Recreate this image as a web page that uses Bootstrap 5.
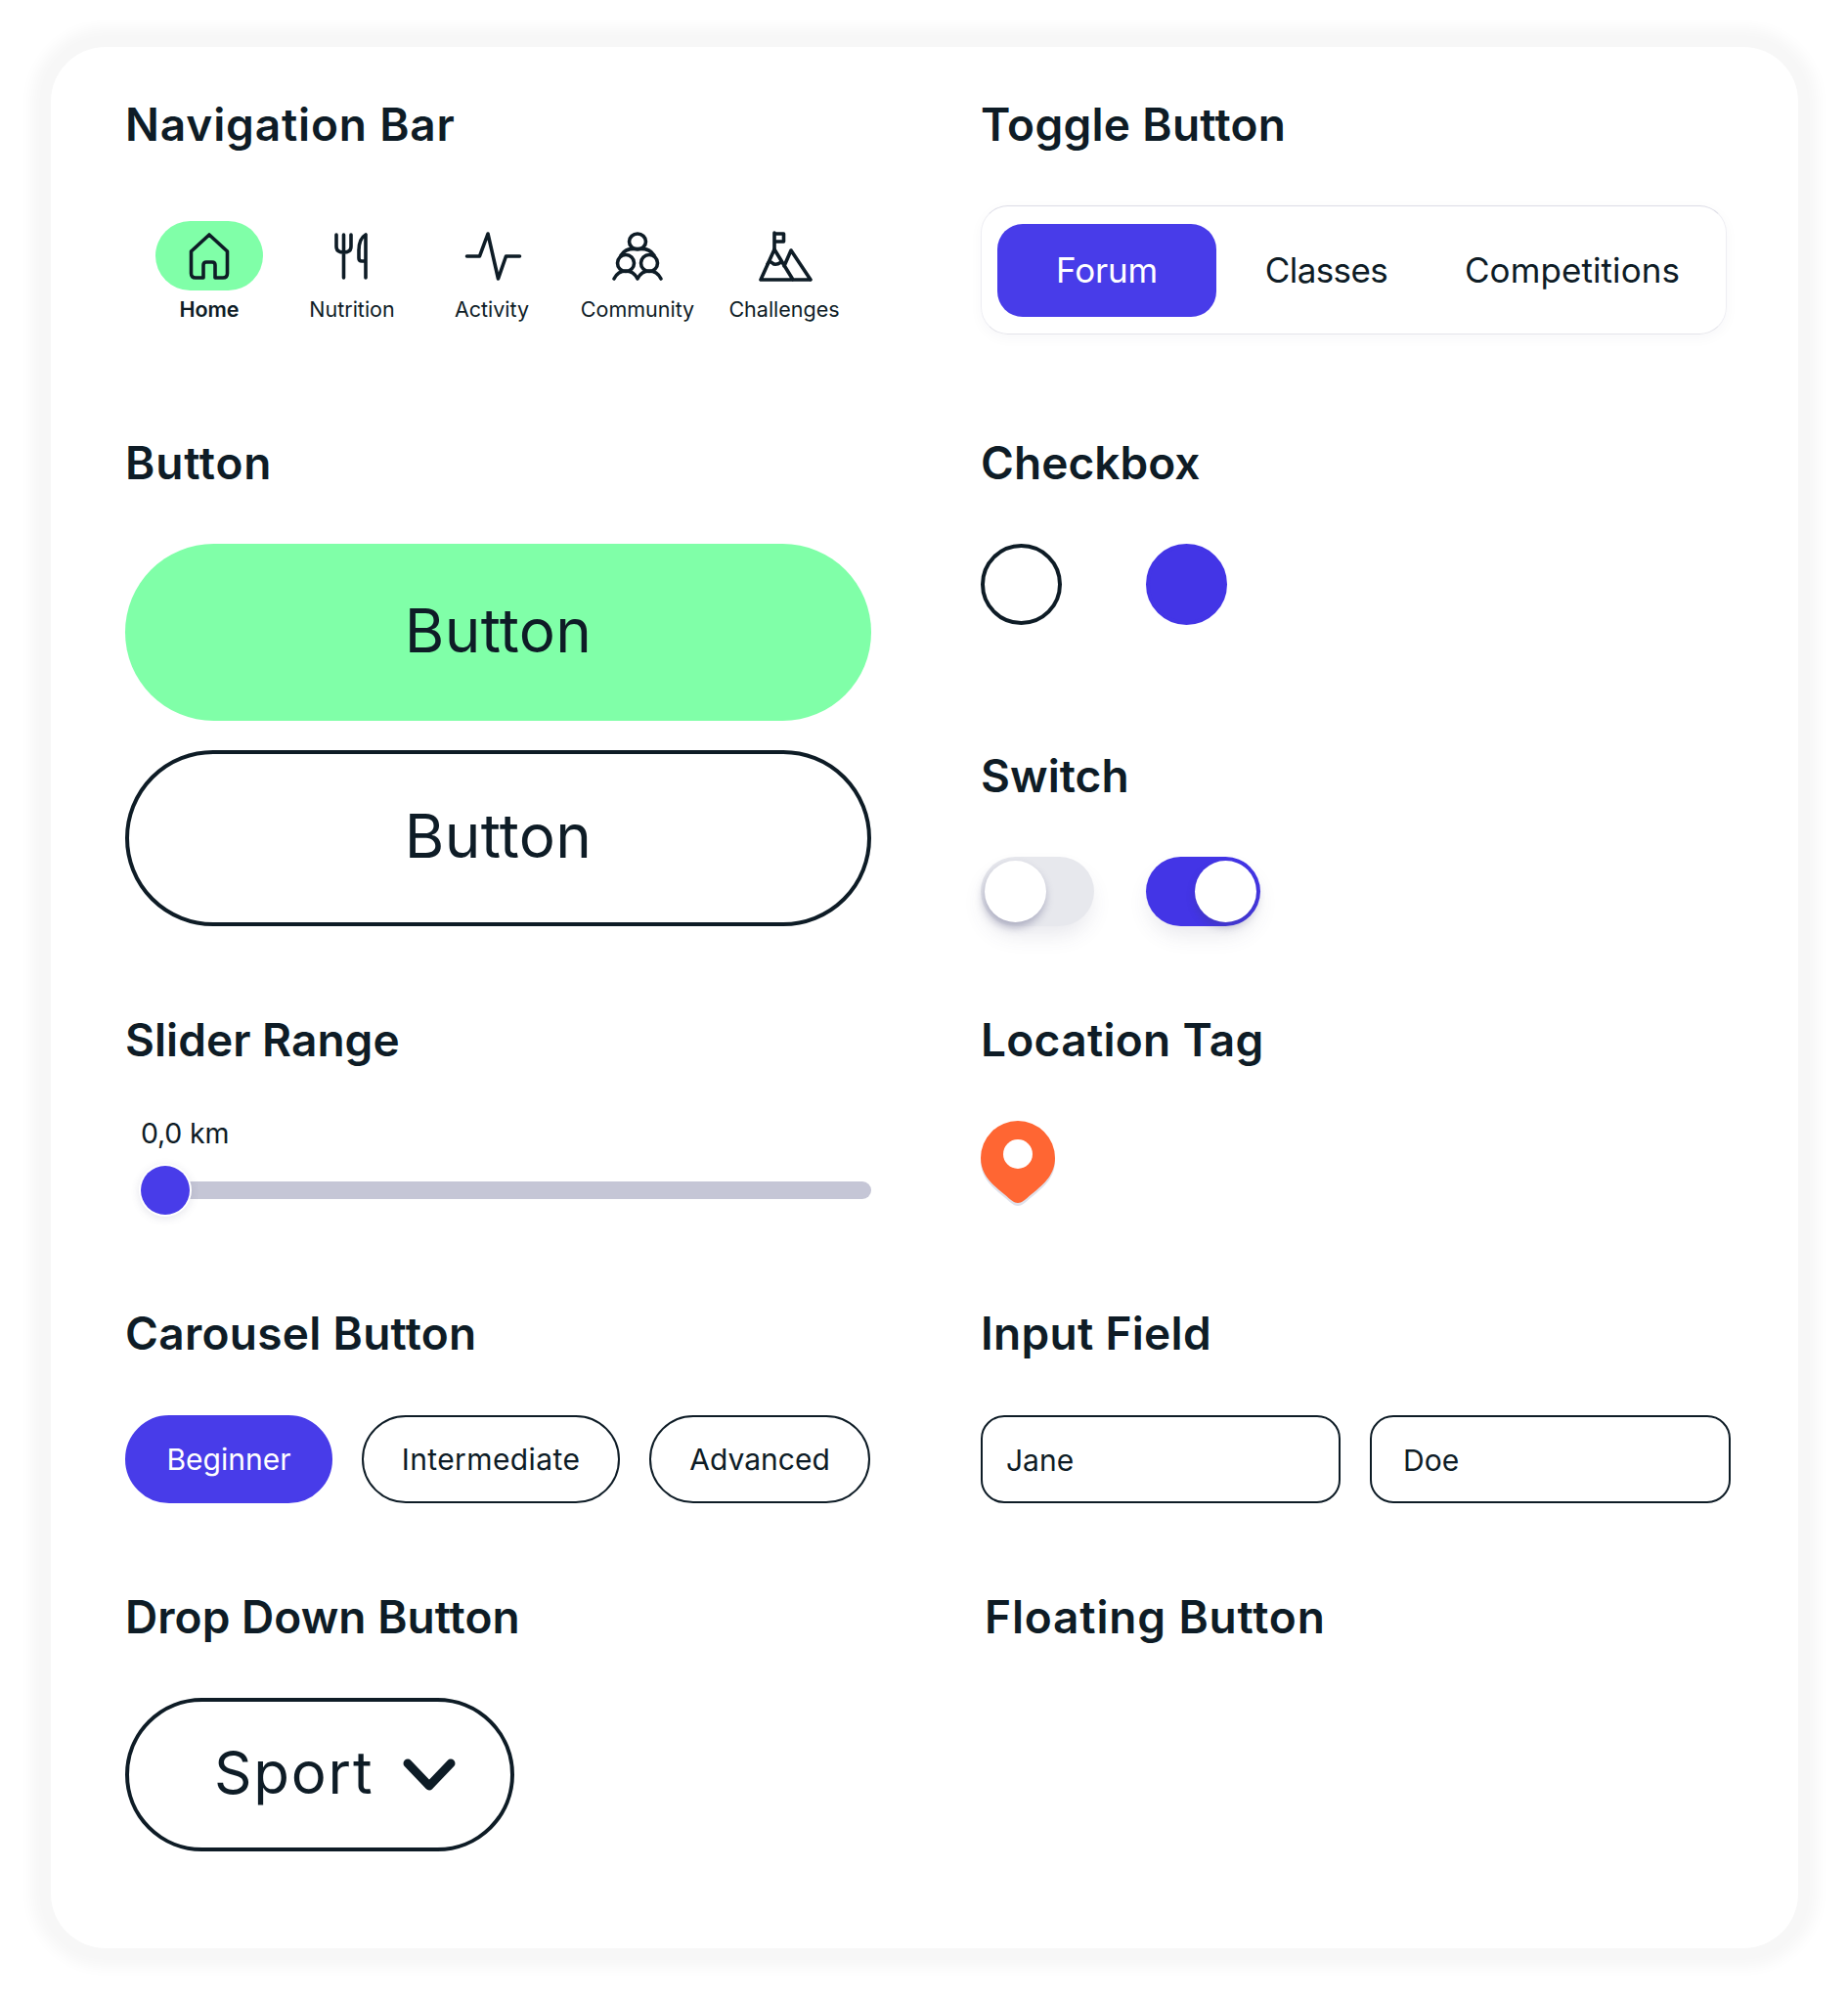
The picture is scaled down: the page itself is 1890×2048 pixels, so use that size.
<!DOCTYPE html>
<html lang="en">
<head>
<meta charset="utf-8">
<title>UI Components</title>
<link href="https://cdn.jsdelivr.net/npm/bootstrap@5.3.0/dist/css/bootstrap.min.css" rel="stylesheet">
<style>
:root{--ink:#0e1c26;--violet:#483ce9;--mint:#80ffa8;}
html,body{background:#fff;}
body{margin:0;padding:48px 0 56px 52px;font-family:Inter,"Liberation Sans",sans-serif;color:var(--ink);}
.sheet{width:1787px;height:1944px;padding:51px 69px 0 76px;background:#fff;border-radius:56px;box-shadow:0 0 14px 20px #f7f7f7;}
.spec-grid{display:grid;grid-template-columns:763px 767px;column-gap:112px;}
.title{font-size:46px;line-height:56px;font-weight:600;margin:0;color:var(--ink);letter-spacing:.3px;}
.title.wide{letter-spacing:.85px;}
.title.tight{letter-spacing:.05px;}
.gap-r2{margin-top:103px}.gap-r3{margin-top:88px}.gap-r4{margin-top:93px}.gap-r5{margin-top:88px}
.after{margin-top:55px}
.tabbar{margin-top:71px;margin-left:13px;}
.tab-cell{display:flex;flex-direction:column;align-items:center;font-size:21.5px;line-height:28px;white-space:nowrap;}
.tab-cell:nth-child(1){width:146px}.tab-cell:nth-child(2){width:146px}.tab-cell:nth-child(3){width:140px}.tab-cell:nth-child(4){width:158px}.tab-cell:nth-child(5){width:142px}
.tab-icon{width:110px;height:71px;border-radius:36px;display:flex;align-items:center;justify-content:center;margin-bottom:5px;}
.tab-icon.on{background:var(--mint);}
.tab-cell.on-label{font-weight:600;}
.tab-cell svg{fill:none;stroke:var(--ink);stroke-width:3.6;stroke-linecap:round;stroke-linejoin:round;overflow:visible;}
.segment{width:763px;height:132px;margin-top:55px;padding:16px;border:1px solid #eeeef3;border-top-color:#dcdce6;border-bottom-color:#e4e4ea;border-radius:28px;box-shadow:0 4px 14px rgba(40,40,90,.035);}
.segment .btn{height:95px;border:0;border-radius:26px;font-size:35px;color:var(--ink);padding:0;letter-spacing:-.2px;white-space:nowrap;}
.seg-a{width:224px;}.seg-a.btn{background:var(--violet);color:#fff;}
.seg-b{width:147px;margin-left:39px;}.segment .seg-b.btn{letter-spacing:-.6px;}
.seg-c{width:262px;margin-left:47px;}.segment .seg-c.btn{letter-spacing:.1px;}
.big-btn.btn{display:flex;align-items:center;justify-content:center;width:763px;height:181px;border-radius:91px;font-size:62px;color:var(--ink);padding:0 0 5px;letter-spacing:.3px;}
.big-btn.fill{background:var(--mint);border:0;}
.big-btn.line{background:#fff;border:4px solid var(--ink);margin-top:30px;height:180px;}
.tick{display:block;width:83px;height:83px;margin:0;border-radius:50%;appearance:none;background:#fff;border:4px solid var(--ink);}
.tick:checked{background:#4335e6;border-color:#4335e6;}
.sw{display:flex;align-items:center;width:116px;height:71px;border-radius:36px;padding:0 4px;background:#e7e8ed;border:0;box-shadow:0 12px 22px -4px rgba(70,70,110,.13);}
.sw.on{width:117px;background:#4335e6;justify-content:flex-end;}
.sw-knob{width:63px;height:63px;border-radius:50%;background:#fff;box-shadow:0 5px 8px rgba(60,60,110,.28);}
.sw:not(.on) .sw-knob{box-shadow:-1px 5px 9px rgba(60,60,110,.35);}
.sw-gap{margin-left:53px;}
.sw-gap.tick-gap{margin-left:86px;}
.sw-head{margin-top:126px;}
.km{margin:48px 0 13px 16px;font-size:28.5px;line-height:40px;letter-spacing:-.2px;}
.km-range.form-range{display:block;margin-left:16px;width:747px;height:50px;padding:0;}
.km-range::-webkit-slider-runnable-track{height:18px;border-radius:9px;background:#c5c6d6;}
.km-range::-webkit-slider-thumb{appearance:none;width:50px;height:50px;margin-top:-16px;border-radius:50%;background:var(--violet);box-shadow:0 0 0 2px #fff,0 2px 8px 2px rgba(80,80,120,.14);border:0;}
.pin{display:block;}
.chips{gap:30px;margin-top:56px;}
.chip.btn{height:90px;border-radius:45px;font-size:30px;color:var(--ink);padding:0;border:2px solid var(--ink);background:#fff;display:flex;align-items:center;justify-content:center;}
.chip.picked{width:212px;background:var(--violet);border-color:var(--violet);color:#fff;}
.chip.mid{width:264px;letter-spacing:.4px;}.chip.adv{width:226px;}
.fields{gap:30px;margin-top:56px;}
.fields .form-control{width:368px;height:90px;border:2px solid var(--ink);border-radius:24px;padding:2px 24px 0;font-size:30px;color:var(--ink);box-shadow:none;}
.fields .form-control.last{width:369px;padding-left:32px;}
.menu-btn.btn{display:flex;align-items:center;width:398px;height:157px;border:4px solid var(--ink);border-radius:79px;font-size:60px;color:var(--ink);padding:0 0 5px 87px;background:#fff;letter-spacing:1.8px;}
.menu-btn svg{margin:5px 0 0 30px;}
.float-head{margin-left:4px;}
</style>
</head>
<body>
<main class="sheet">

  <section class="spec-grid">
    <div>
      <h2 class="title wide">Navigation Bar</h2>
      <nav class="tabbar d-flex">
        <div class="tab-cell on-label">
          <span class="tab-icon on">
            <svg width="42" height="48" viewBox="0 0 42 48"><path d="M21 2 L39.500 19 V41.500 q0 4.500 -4.500 4.500 H27 V33 q0-3 -3-3 H18 q-3 0 -3 3 V46 H7 q-4.500 0 -4.500-4.500 V19 Z"/></svg>
          </span>Home
        </div>
        <div class="tab-cell">
          <span class="tab-icon">
            <svg width="36" height="50" viewBox="1 0 36 50"><path d="M3 3 V15 Q3 21 10.500 21 Q18 21 18 15 V3 M10.500 3 V47"/><path d="M33 3 V47 M33 3 Q26 7 26 19 V27 Q26 30 29 30 H33"/></svg>
          </span>Nutrition
        </div>
        <div class="tab-cell">
          <span class="tab-icon">
            <svg width="60" height="52" viewBox="-2.500 0 60 52"><path d="M2 26 H15 L23.500 3 L34 49 L42 26 H56"/></svg>
          </span>Activity
        </div>
        <div class="tab-cell">
          <span class="tab-icon">
            <svg width="54" height="50" viewBox="0 0 54 50"><ellipse cx="27" cy="10" rx="8.500" ry="8"/><ellipse cx="15" cy="32" rx="8.500" ry="8.500"/><ellipse cx="39" cy="32" rx="8.500" ry="8.500"/><path d="M10 24 Q14 16.500 27 17.500 Q40 16.500 44 24"/><path d="M3 48 Q7 40 15 40 Q23 40 27 48 Q31 40 39 40 Q47 40 51 48"/></svg>
          </span>Community
        </div>
        <div class="tab-cell">
          <span class="tab-icon">
            <svg width="56" height="54" viewBox="-1 0 56 54"><path d="M17 20 V3 M17 4 H26.500 V12 H17"/><path d="M3 51 H54 M3 51 L17 20 L36 51 M27 37 L34 21 L54 51"/><path d="M10 35 Q12 31 15 34 Q18 37 24 33"/></svg>
          </span>Challenges
        </div>
      </nav>
    </div>
    <div>
      <h2 class="title">Toggle Button</h2>
      <div class="segment d-flex align-items-center">
        <button type="button" class="btn seg-a">Forum</button>
        <button type="button" class="btn seg-b">Classes</button>
        <button type="button" class="btn seg-c">Competitions</button>
      </div>
    </div>
  </section>

  <section class="spec-grid gap-r2">
    <div>
      <h2 class="title wide">Button</h2>
      <button type="button" class="btn big-btn fill after">Button</button>
      <button type="button" class="btn big-btn line">Button</button>
    </div>
    <div>
      <h2 class="title tight">Checkbox</h2>
      <div class="d-flex after">
        <input class="tick" type="checkbox" aria-label="Unchecked">
        <input class="tick sw-gap tick-gap" type="checkbox" checked aria-label="Checked">
      </div>
      <h2 class="title tight sw-head">Switch</h2>
      <div class="d-flex after">
        <div class="sw"><span class="sw-knob"></span></div>
        <div class="sw on sw-gap"><span class="sw-knob"></span></div>
      </div>
    </div>
  </section>

  <section class="spec-grid gap-r3">
    <div>
      <h2 class="title tight">Slider Range</h2>
      <p class="km">0,0 km</p>
      <input type="range" class="form-range km-range" min="0" max="100" value="0" aria-label="Distance">
    </div>
    <div>
      <h2 class="title">Location Tag</h2>
      <svg class="pin after" width="80" height="90" viewBox="0 0 80 90"><path d="M38 84 C34 84 31 81 24 75 C10 64 0 54 0 38 A38 38 0 0 1 76 38 C76 54 66 64 52 75 C45 81 42 84 38 84 Z" fill="#dfe1ea" transform="translate(0 3)"/><path d="M38 84 C34 84 31 81 24 75 C10 64 0 54 0 38 A38 38 0 0 1 76 38 C76 54 66 64 52 75 C45 81 42 84 38 84 Z" fill="#ff6633"/><circle cx="38" cy="34" r="15" fill="#fff"/></svg>
    </div>
  </section>

  <section class="spec-grid gap-r4">
    <div>
      <h2 class="title">Carousel Button</h2>
      <div class="d-flex chips">
        <button type="button" class="btn chip picked">Beginner</button>
        <button type="button" class="btn chip mid">Intermediate</button>
        <button type="button" class="btn chip adv">Advanced</button>
      </div>
    </div>
    <div>
      <h2 class="title">Input Field</h2>
      <div class="d-flex fields">
        <input class="form-control" type="text" value="Jane" aria-label="First name">
        <input class="form-control last" type="text" value="Doe" aria-label="Last name">
      </div>
    </div>
  </section>

  <section class="spec-grid gap-r5">
    <div>
      <h2 class="title tight">Drop Down Button</h2>
      <button type="button" class="btn menu-btn after">Sport
        <svg width="54" height="34" viewBox="0 0 54 34" fill="none" stroke="#0e1c26" stroke-width="9" stroke-linecap="round" stroke-linejoin="round"><path d="M5 5 L27 28 L49 5"/></svg>
      </button>
    </div>
    <div>
      <h2 class="title wide float-head">Floating Button</h2>
    </div>
  </section>

</main>
<script src="https://cdn.jsdelivr.net/npm/bootstrap@5.3.0/dist/js/bootstrap.bundle.min.js"></script>
</body>
</html>
